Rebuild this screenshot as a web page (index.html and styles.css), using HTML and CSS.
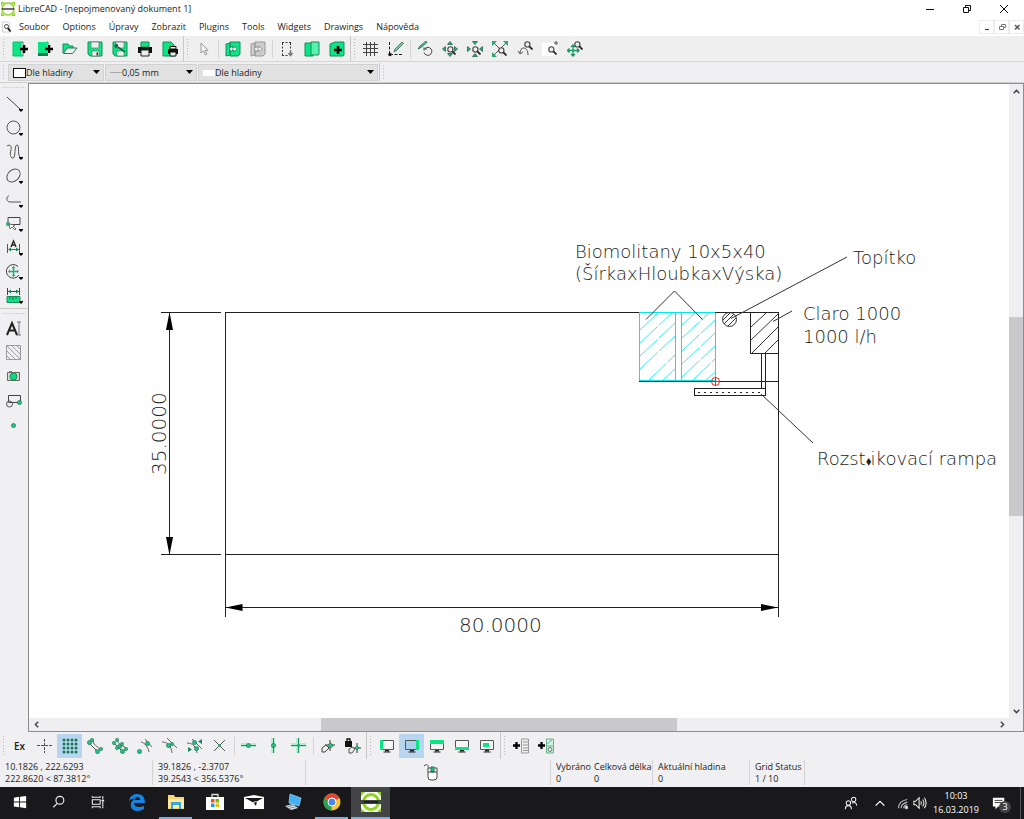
FILE: index.html
```html
<!DOCTYPE html>
<html lang="cs">
<head>
<meta charset="utf-8">
<title>LibreCAD - [nepojmenovaný dokument 1]</title>
<link rel="stylesheet" href="styles.css">
</head>
<body>
<svg class="defs" aria-hidden="true">
  <defs>
    <symbol id="node" viewBox="0 0 4 4"><circle cx="2" cy="2" r="1.7" fill="#27c184" stroke="#16704d" stroke-width=".5"/></symbol>
    <symbol id="lens" viewBox="0 0 8 8"><circle cx="3" cy="3" r="2.3" fill="#eee" stroke="#444"/><path d="M4.8 4.8 7.5 7.5" stroke="#222" stroke-width="1.6"/></symbol>
    <symbol id="drop" viewBox="0 0 4 3"><path d="M0 0h4v1L2 3 0 1z" fill="#000"/></symbol>
    <symbol id="plus" viewBox="0 0 8 8"><path d="M4 0v8M0 4h8" stroke="#000" stroke-width="2.6"/></symbol>
    <symbol id="libre" viewBox="0 0 20 20"><circle cx="10" cy="10" r="8.500" fill="#fff" stroke="#8fd321" stroke-width="2"/><path d="M0 1h5M1 0v5M15 1h5M19 0v5M0 19h5M1 15v5M15 19h5M19 15v5" stroke="#8fd321" stroke-width="2"/><path d="M1 10h18" stroke="#333" stroke-width="2"/></symbol>
    <symbol id="libre-solid" viewBox="0 0 20 20"><path d="M0 0h20v20H0z" fill="#f4fbe8"/><circle cx="10" cy="10" r="7.500" fill="#fff" stroke="#8fd321" stroke-width="3"/><path d="M0 10h20" stroke="#434446" stroke-width="4"/><path d="M3 10h14" stroke="#222" stroke-width="2"/><path d="M0 0h4L0 4zM20 0h-4l4 4zM0 20h4l-4-4zM20 20h-4l4-4z" fill="#8fd321"/></symbol>
    <symbol id="monitor" viewBox="0 0 16 16"><path d="M1.500 2.500h13v9h-13z" fill="#f6f6f6" stroke="#555"/><path d="M6 12h4v1.500H6z" fill="#222"/><path d="M4.500 14h7" stroke="#222"/></symbol>
  </defs>
</svg>

<header class="titlebar">
  <svg class="app-icon" viewBox="0 0 20 20"><use href="#libre"/></svg>
  <h1>LibreCAD - [nepojmenovaný dokument 1]</h1>
  <div class="win-controls">
    <button aria-label="Minimalizovat"><svg viewBox="0 0 10 10"><path d="M1 5.500h8" stroke="#111"/></svg></button>
    <button aria-label="Obnovit"><svg viewBox="0 0 10 10" fill="none" stroke="#111"><path d="M1.500 3.500h5v5h-5zM3.500 3V1.500h5v5H7"/></svg></button>
    <button aria-label="Zavřít"><svg viewBox="0 0 10 10"><path d="M1 1l8 8M9 1 1 9" stroke="#111"/></svg></button>
  </div>
</header>

<nav class="menubar">
  <svg class="doc-icon" viewBox="0 0 12 12"><path d="M1.500.5h6l2 2v9h-8z" fill="#fff" stroke="#ccc"/><circle cx="6" cy="5.500" r="2.200" fill="none" stroke="#333"/><path d="M7.500 7.500l3 3.500" stroke="#111" stroke-width="1.800"/></svg>
  <button>Soubor</button><button>Options</button><button>Úpravy</button><button>Zobrazit</button><button>Plugins</button><button>Tools</button><button>Widgets</button><button>Drawings</button><button>Nápověda</button>
  <div class="doc-controls">
    <button aria-label="Minimalizovat dokument"><svg viewBox="0 0 8 8"><path d="M2 6.500h4" stroke="#444" stroke-width="1.200"/></svg></button>
    <button aria-label="Obnovit dokument"><svg viewBox="0 0 8 8" fill="none" stroke="#777"><path d="M1.500 3.500h4v3h-4zM3.500 3V1.500h4v3H6"/></svg></button>
    <button aria-label="Zavřít dokument"><svg viewBox="0 0 8 8"><path d="M2 2l4.500 4.500M6.500 2 2 6.500" stroke="#555" stroke-width="1.500"/></svg></button>
  </div>
</nav>

<div class="toolbar">
  <div class="group">
    <i class="grip"></i>
    <button aria-label="Nový"><svg viewBox="0 0 16 16"><path d="M1 1h8v14H1z" fill="#0be584" stroke="#0bbf70"/><path d="M9 1h2v3M9 15h2v-3" fill="none" stroke="#159a62"/><use href="#plus" x="8" y="4" width="8" height="8"/></svg></button>
    <button aria-label="Nový ze šablony"><svg viewBox="0 0 16 16"><path d="M1 1h9v11H1z" fill="#0be584"/><path d="M1 12h10v3H1z" fill="#167b50"/><path d="M10 1h1v3" fill="none" stroke="#159a62"/><use href="#plus" x="8" y="4" width="8" height="8"/></svg></button>
    <button aria-label="Otevřít"><svg viewBox="0 0 16 16"><path d="M1 12V3h5l1 2h4v2" fill="#0be584" stroke="#148a5a"/><path d="M1.500 12.500 5 7h10l-4.500 5.500z" fill="#e9f7f0" stroke="#2f7358"/></svg></button>
    <button aria-label="Uložit"><svg viewBox="0 0 16 16"><path d="M1 1h14v14H3l-2-2z" fill="#0be584" stroke="#168c5b"/><path d="M4 1h8v6H4zM5 10h7v5H5z" fill="#eee" stroke="#60766c" stroke-width=".7"/><path d="M9.500 11.500h1.500v3H9.500z" fill="#333"/></svg></button>
    <button aria-label="Uložit jako"><svg viewBox="0 0 16 16"><path d="M1 1h14v14H3l-2-2z" fill="#0be584" stroke="#168c5b"/><path d="M4 1h8v6H4zM5 10h7v5H5z" fill="#eee" stroke="#60766c" stroke-width=".7"/><path d="M3 4l10 7M3 4l1 3M3 4h3" stroke="#254b3b" stroke-width="1.500"/></svg></button>
    <button aria-label="Tisk"><svg viewBox="0 0 16 16"><path d="M4 1h8v5H4z" fill="#0be584" stroke="#168c5b"/><path d="M1 6h14v6H1z" fill="#0c120f"/><path d="M4 9h8v6H4z" fill="#eee" stroke="#222"/></svg></button>
    <button aria-label="Náhled tisku"><svg viewBox="0 0 16 16"><path d="M1 1h8l3 3v11H1z" fill="#0be584" stroke="#168c5b"/><path d="M6 8h10v5H6z" fill="#111"/><path d="M8 5.500h6V8H8zM8 11h6v4H8z" fill="#dff5eb" stroke="#111"/></svg></button>
  </div>
  <div class="group">
    <i class="grip"></i>
    <button aria-label="Výběr"><svg viewBox="0 0 16 16"><path d="M5 2v10l2.500-2 2 4 1.500-1-2-3.500h3z" fill="#f4f4f4" stroke="#999"/></svg></button>
    <i class="sep"></i>
    <button aria-label="Vlevo"><svg viewBox="0 0 16 16"><path d="M1 3l4-1v12l-4 1zM5 1h10v12l-2 2H5z" fill="#0be584" stroke="#168c5b"/><path d="M4 8l3-3v2h2V5l3 3-3 3V9H7v2z" fill="#e8fff3" stroke="#28795b" stroke-width=".7"/></svg></button>
    <button aria-label="Vpravo"><svg viewBox="0 0 16 16"><path d="M1 3l4-1v12l-4 1zM5 1h10v12l-2 2H5z" fill="#ccc" stroke="#999"/><path d="M4 8l3-3v2h2V5l3 3-3 3V9H7v2z" fill="#eee" stroke="#888" stroke-width=".7"/></svg></button>
    <i class="sep"></i>
    <button aria-label="Vyjmout"><svg viewBox="0 0 16 16"><path d="M3 1.500h9M3 14.500h6M3.500 2v12M11.500 2v7" fill="none" stroke="#333" stroke-dasharray="2 1.500"/><path d="M11.500 9v5M9.500 12l2 2.500 2-2.500" stroke="#777" fill="none" stroke-width="1.500"/></svg></button>
    <button aria-label="Kopírovat"><svg viewBox="0 0 16 16"><path d="M1 2h8v13H1z" fill="#0be584" stroke="#168c5b"/><path d="M7 1h8v12l-1 1H7z" fill="#5af0ae" stroke="#168c5b"/></svg></button>
    <button aria-label="Vložit"><svg viewBox="0 0 16 16"><path d="M1 3l5-2h9v13l-1 1H1z" fill="#0be584" stroke="#168c5b"/><use href="#plus" x="5" y="5" width="8" height="8"/></svg></button>
  </div>
  <div class="group">
    <i class="grip"></i>
    <button aria-label="Mřížka"><svg viewBox="0 0 16 16"><path d="M3.500 1v14M7.500 1v14M11.500 1v14M0 3.500h15M0 7.500h15M0 11.500h15" stroke="#444"/></svg></button>
    <button aria-label="Návrh"><svg viewBox="0 0 16 16"><path d="M1.500 1v13M2 13.500h13" stroke="#222" stroke-dasharray="3 1.500"/><path d="M6 11l1-3 7-7 1.500 1.500-7 7z" fill="#79c9a6" stroke="#2d6b50" stroke-width=".8"/><circle cx="2" cy="13.500" r="1.700" fill="#111"/></svg></button>
    <i class="sep"></i>
    <button aria-label="Překreslit"><svg viewBox="0 0 16 16"><path d="M1 8l2-3 6-5 1 1.500-6 5z" fill="#4fc695" stroke="#24664c" stroke-width=".8"/><path d="M8 7.500a4 4 0 1 1-1 4M7 6.500v3M7 8h3" fill="none" stroke="#444"/></svg></button>
    <button aria-label="Přiblížit"><svg viewBox="0 0 16 16"><path d="M5.500 3.500 8 .5l2.500 3zM5.500 12.500l2.500 3 2.500-3zM3.500 5.500.5 8l3 2.500zM12.500 5.500l3 2.500-3 2.500z" fill="#27a875" stroke="#165c41" stroke-width=".7"/><use href="#lens" x="5" y="5" width="9" height="9"/></svg></button>
    <button aria-label="Oddálit"><svg viewBox="0 0 16 16"><path d="M5.500.5h5L8 3.500zM5.500 15.500h5L8 12.500zM.5 5.500v5L3.500 8zM15.500 5.500v5L12.500 8z" fill="#27a875" stroke="#165c41" stroke-width=".7"/><use href="#lens" x="5" y="5" width="9" height="9"/></svg></button>
    <button aria-label="Zobrazit vše"><svg viewBox="0 0 16 16"><path d="M2 2l12 12M14 2 2 14" stroke="#555"/><path d="M0 0h5L0 5zM16 0v5l-5-5zM0 16v-5l5 5z" fill="#27a875"/><use href="#lens" x="6" y="6" width="9" height="9"/></svg></button>
    <button aria-label="Předchozí pohled"><svg viewBox="0 0 16 16"><path d="M1 10l2 3 3-2M3 12c0-7 8-7 8 2" fill="none" stroke="#555"/><use href="#lens" x="7" y="0" width="9" height="9"/></svg></button>
    <button aria-label="Přiblížit okno"><svg viewBox="0 0 16 16"><path d="M0 2h14v13H0z" fill="#fff"/><path d="M14 0v4M12 2h4" stroke="#555"/><use href="#lens" x="6" y="5" width="9" height="9"/></svg></button>
    <button aria-label="Posun"><svg viewBox="0 0 16 16"><path d="M6 4v11M.5 9.500h11M4 6l2-2 2 2M4 13l2 2 2-2M2.500 7.500l-2 2 2 2M10 7.500l2 2-2 2" fill="none" stroke="#159562" stroke-width="1.300"/><use href="#lens" x="7" y="0" width="9" height="9"/></svg></button>
  </div>
</div>

<div class="pen-toolbar">
  <i class="grip"></i>
  <div class="combo combo-color"><i class="swatch"></i><select aria-label="Barva"><option>Dle hladiny</option></select><svg viewBox="0 0 8 5"><path d="M1 0h7L4.500 4z"/></svg></div>
  <div class="combo combo-width"><i class="stroke"></i><select aria-label="Tloušťka čáry"><option>0,05 mm</option></select><svg viewBox="0 0 8 5"><path d="M1 0h7L4.500 4z"/></svg></div>
  <div class="combo combo-type"><i class="blank"></i><select aria-label="Typ čáry"><option>Dle hladiny</option></select><svg viewBox="0 0 8 5"><path d="M1 0h7L4.500 4z"/></svg></div>
  <div class="group"><i class="grip"></i></div>
</div>

<main class="workspace">
  <aside class="palette">
    <i class="grip-h"></i>
    <button aria-label="Čára"><svg viewBox="0 0 18 18"><path d="M2 2l13 12" stroke="#444"/><use href="#drop" x="14" y="14" width="4" height="3"/></svg></button>
    <button aria-label="Kružnice"><svg viewBox="0 0 18 18"><circle cx="8.500" cy="8.500" r="6.500" fill="none" stroke="#555"/><use href="#drop" x="14" y="14" width="4" height="3"/></svg></button>
    <button aria-label="Křivka"><svg viewBox="0 0 18 18"><path d="M2 3c3-2 5 0 4 4s-1 8 2 8 1-13 4-13 0 9 3 12" fill="none" stroke="#555"/><use href="#drop" x="14" y="14" width="4" height="3"/></svg></button>
    <button aria-label="Elipsa"><svg viewBox="0 0 18 18"><ellipse cx="8.500" cy="8.500" rx="7.500" ry="5.500" transform="rotate(-42 8.500 8.500)" fill="none" stroke="#555"/><use href="#drop" x="14" y="14" width="4" height="3"/></svg></button>
    <button aria-label="Lomená čára"><svg viewBox="0 0 18 18"><path d="M4 5C1 5 1 11 5 11h11" fill="none" stroke="#555"/><use href="#drop" x="14" y="14" width="4" height="3"/></svg></button>
    <button aria-label="Vybrat"><svg viewBox="0 0 18 18"><path d="M3 2.500h12v7H3z" fill="none" stroke="#444"/><use href="#node" x="1" y="7" width="4" height="4"/><path d="M4 9l1 5 2-2 3 3 1-1-3-3 2-1z" fill="#fff" stroke="#555" stroke-width=".8"/><use href="#drop" x="14" y="14" width="4" height="3"/></svg></button>
    <button aria-label="Kóta"><svg viewBox="0 0 18 18"><path d="M2.500 5v9M14.500 5v9" stroke="#555"/><path d="M4 10.500h10" stroke="#168557"/><path d="M3 10.500l3-2v4zM14 10.500l-3-2v4z" fill="#168557"/><path d="M6 8l2.500-6L11 8M7 6h3" fill="none" stroke="#222" stroke-width="1.300"/><use href="#drop" x="14" y="14" width="4" height="3"/></svg></button>
    <button aria-label="Úpravy"><svg viewBox="0 0 18 18"><path d="M14 12A6.800 6.800 0 1 1 13 3.500" fill="none" stroke="#444"/><path d="M8.500 4.500v8M4.500 8.500h8" stroke="#20ae77" stroke-width="1.600"/><path d="M8.500 3l2 2h-4zM8.500 14l2-2h-4zM3 8.500l2-2v4zM14 8.500l-2-2v4z" fill="#20ae77"/><use href="#drop" x="14" y="14" width="4" height="3"/></svg></button>
    <button aria-label="Informace"><svg viewBox="0 0 18 18"><path d="M2.500 1v7M14.500 1v7M3 4.500h12" stroke="#444"/><path d="M3 4.500l3-2v4zM14 4.500l-3-2v4z" fill="#168557"/><path d="M2 9.500h13v6H2z" fill="#0be584" stroke="#168c5b"/><path d="M5 10v2M8 10v3M11 10v2" stroke="#176c49"/><use href="#drop" x="14" y="14" width="4" height="3"/></svg></button>
    <i class="rule"></i>
    <i class="grip-h"></i>
    <button aria-label="Text"><svg viewBox="0 0 18 18"><path d="M2 15 7 3l5 12M4 10.500h7" fill="none" stroke="#222" stroke-width="2"/><path d="M12 2h4M12 15h4M14 2v13" stroke="#777"/></svg></button>
    <button aria-label="Šrafa"><svg viewBox="0 0 18 18"><path d="M1.500 1.500h14v14h-14zM2 12l4 4M2 7l9 9M2 2l14 14M7 2l9 9M12 2l4 4" fill="none" stroke="#888" stroke-width=".8"/></svg></button>
    <button aria-label="Obrázek"><svg viewBox="0 0 18 18"><path d="M2.500 4.500h12v8h-12z" fill="#d8d8ce" stroke="#666"/><path d="M4 3h3v2H4z" fill="#777"/><circle cx="8.500" cy="8.500" r="3.500" fill="#13d882" stroke="#168c5b"/></svg></button>
    <button aria-label="Blok"><svg viewBox="0 0 18 18"><path d="M3.500 3.500h12v7h-12z" fill="none" stroke="#444"/><circle cx="4.500" cy="12" r="3" fill="none" stroke="#555"/><use href="#node" x="12" y="8" width="5" height="5"/></svg></button>
    <button aria-label="Bod"><svg viewBox="0 0 18 18"><use href="#node" x="6" y="7" width="5" height="5"/></svg></button>
  </aside>

  <section class="view">
    <svg class="drawing" role="img" aria-label="Výkres">
      <g transform="translate(-29 -84)" shape-rendering="crispEdges" fill="none" stroke="#222">
        <g stroke="#00e8e8">
          <path d="M639.500 380V312.500H675.500V380M681.500 380V312.500H715.500V380M639 380.500H715"/>
          <path d="M640 330l18-17M640 343l32-30M640 356l35-33M640 369l35-33M649 380l26-25M663 380l12-11M682 325l13-12M682 338l27-25M682 351l33-31M682 364l33-31M682 377l33-31M693 380l22-21M706 380l9-8" shape-rendering="auto" stroke-width=".8" stroke-dasharray="24 2"/>
          <path d="M675 312.500h6"/>
        </g>
        <path d="M225.500 617V312.500H639M715 312.500h63M778.500 312v305M225 554.500h553M161 312.500h60M161 554.500h60M169.500 312v242M225 607.500h553M639 381.500h139"/>
        <path d="M169.500 312l3.500 18h-7zM169.500 555l3.500-18h-7zM225.500 607.500l17-3.500v7zM778 607.500l-17-3.500v7z" fill="#000" stroke="none" shape-rendering="auto"/>
        <path d="M750.500 312v41.500h28M761.500 354v34M765.500 354v34M694.500 388.500h71v7h-71z"/>
        <path d="M698 392.500h66" stroke-dasharray="2 4"/>
        <g shape-rendering="auto" stroke="#333">
          <path d="M646 319.500 674.500 291 702.500 319.500M731 318.500 847 257M773 321.500 792 311M761 394l52 49M751 327l15-14M751 340l27-26M752 353l26-26M765 353l13-13"/>
          <circle cx="729.500" cy="319.500" r="7"/>
          <path d="M723 320l7-7M724 324l10-10M728 326l8-8"/>
          <g stroke="#ef2020"><circle cx="715.500" cy="381.500" r="4"/><path d="M715.500 377v9M711 381.500h9"/></g>
        </g>
      </g>
      <g class="cad-text" transform="translate(-29 -84)">
        <text x="575" y="258">Biomolitany 10x5x40</text>
        <text x="575" y="280">(ŠírkaxHloubkaxVýska)</text>
        <text x="853" y="264">Topítko</text>
        <text x="803" y="320">Claro 1000</text>
        <text x="803" y="343">1000 l/h</text>
        <text x="817" y="465">Rozst<tspan class="mark">⬧</tspan>ikovací rampa</text>
        <text class="dim" x="459" y="632">80.0000</text>
        <text class="dim" transform="translate(166 475) rotate(-90)">35.0000</text>
      </g>
    </svg>
    <div class="vscroll">
      <button aria-label="Nahoru"><svg viewBox="0 0 8 8"><path d="M1.500 5.500 4 3l2.500 2.500"/></svg></button>
      <div class="track"><i class="before"></i><i class="thumb"></i><i class="after"></i></div>
      <button aria-label="Dolů"><svg viewBox="0 0 8 8"><path d="M1.500 2.500 4 5l2.500-2.500"/></svg></button>
    </div>
    <div class="hscroll">
      <button aria-label="Vlevo"><svg viewBox="0 0 8 8"><path d="M5.500 1.500 3 4l2.500 2.500"/></svg></button>
      <div class="track"><i class="before"></i><i class="thumb"></i><i class="after"></i></div>
      <button aria-label="Vpravo"><svg viewBox="0 0 8 8"><path d="M2.500 1.500 5 4 2.500 6.500"/></svg></button>
    </div>
  </section>
</main>

<div class="toolbar snapbar">
  <div class="group">
    <i class="grip"></i>
    <button class="ex">Ex</button>
    <button aria-label="Volné uchopení"><svg viewBox="0 0 16 16"><path d="M7.500 1v14M0 7.500h15" stroke="#555" stroke-dasharray="3 1"/></svg></button>
    <button class="on" aria-label="Mřížka"><svg viewBox="0 0 16 16"><path d="M2 2v13M6 2v13M10 2v13M14 2v13" stroke="#167b55" stroke-width="3" stroke-linecap="round" stroke-dasharray="0 4"/></svg></button>
    <button aria-label="Koncové body"><svg viewBox="0 0 16 16"><path d="M2 5l8 8M6 2c0 5 4 6 7 9" fill="none" stroke="#555"/><use href="#node" x="0" y="2" width="5" height="5"/><use href="#node" x="3" y="0" width="4" height="4"/><use href="#node" x="8" y="11" width="5" height="5"/><use href="#node" x="12" y="9" width="4" height="4"/></svg></button>
    <button aria-label="Na entitě"><svg viewBox="0 0 16 16"><path d="M2 5l9 9M5 1c1 6 5 6 9 9" fill="none" stroke="#555"/><use href="#node" x="0" y="3" width="4" height="4"/><use href="#node" x="3" y="0" width="4" height="4"/><use href="#node" x="5" y="6" width="5" height="5"/><use href="#node" x="8" y="4" width="4" height="4"/><use href="#node" x="8" y="11" width="5" height="5"/><use href="#node" x="12" y="9" width="4" height="4"/><use href="#node" x="3" y="8" width="4" height="4"/></svg></button>
    <button aria-label="Střed"><svg viewBox="0 0 16 16"><path d="M4 4c4 1 7 5 8 10M8 1l7 8" fill="none" stroke="#666"/><use href="#node" x="8" y="3" width="5" height="5"/><use href="#node" x="0" y="11" width="5" height="5"/></svg></button>
    <button aria-label="Uprostřed"><svg viewBox="0 0 16 16"><path d="M0 4c6 0 9 4 10 11M5 0l10 10" fill="none" stroke="#666"/><use href="#node" x="4" y="5" width="5" height="5"/><use href="#node" x="8" y="4" width="4" height="4"/></svg></button>
    <button aria-label="Vzdálenost"><svg viewBox="0 0 16 16"><path d="M0 5c6 0 9 4 10 10M5 1l10 10" fill="none" stroke="#666"/><use href="#node" x="5" y="2" width="5" height="5"/><use href="#node" x="7" y="8" width="5" height="5"/><path d="M15 1v5l-4-2.500zM1 9v5l4-2.500z" fill="#16895b"/></svg></button>
    <button aria-label="Průsečík"><svg viewBox="0 0 16 16"><path d="M2 2l11 11M13 2 2 13" stroke="#555"/><use href="#node" x="6" y="6" width="3" height="3"/></svg></button>
    <i class="sep"></i>
    <button aria-label="Vodorovně"><svg viewBox="0 0 16 16"><path d="M0 5h15v4H0z" fill="#b3eed2"/><path d="M0 7.500h15" stroke="#248b61"/><use href="#node" x="5" y="5" width="5" height="5"/></svg></button>
    <button aria-label="Svisle"><svg viewBox="0 0 16 16"><path d="M5 0h4v15H5z" fill="#b3eed2"/><path d="M7.500 0v15" stroke="#248b61"/><use href="#node" x="5" y="5" width="5" height="5"/></svg></button>
    <button aria-label="Ortogonálně"><svg viewBox="0 0 16 16"><path d="M5 0h4v15H5zM0 5h15v4H0z" fill="#b3eed2"/><path d="M7.500 0v15M0 7.500h15" stroke="#248b61"/><use href="#node" x="6" y="6" width="3" height="3"/></svg></button>
    <i class="sep"></i>
    <button aria-label="Relativní nula"><svg viewBox="0 0 16 16"><path d="M10 2v11M5 7h10" stroke="#333"/><use href="#node" x="8" y="5" width="5" height="5"/><path d="M2 10l4-3 3 3-4 4H2z" fill="#eee" stroke="#444"/></svg></button>
    <button aria-label="Zamknout relativní nulu"><svg viewBox="0 0 16 16"><path d="M0 3h7v6H0z" fill="#111"/><path d="M2 4V1h3v3" fill="none" stroke="#111" stroke-width="1.300"/><path d="M12 5v10M7 10h9" stroke="#333"/><use href="#node" x="10" y="8" width="4" height="4"/><path d="M4 11l3-2 3 2-3 4H4z" fill="#eee" stroke="#555"/></svg></button>
  </div>
  <div class="group">
    <i class="grip"></i>
    <button aria-label="Levý panel"><svg viewBox="0 0 16 16"><use href="#monitor" width="16" height="16"/><path d="M1 2h3v10H1z" fill="#0be584"/></svg></button>
    <button class="on" aria-label="Pravý panel"><svg viewBox="0 0 16 16"><use href="#monitor" width="16" height="16"/><path d="M2 3h10v8H2z" fill="#abd0ed"/><path d="M12 2h3v10h-3z" fill="#0be584"/></svg></button>
    <button aria-label="Horní panel"><svg viewBox="0 0 16 16"><use href="#monitor" width="16" height="16"/><path d="M1 2h14v4H1z" fill="#0be584"/></svg></button>
    <button aria-label="Dolní panel"><svg viewBox="0 0 16 16"><use href="#monitor" width="16" height="16"/><path d="M1 9h14v3H1z" fill="#0be584"/></svg></button>
    <button aria-label="Plovoucí panel"><svg viewBox="0 0 16 16"><use href="#monitor" width="16" height="16"/><path d="M4 5h6v4H4z" fill="#0be584"/></svg></button>
  </div>
  <div class="group">
    <i class="grip"></i>
    <button aria-label="Přidat nabídku"><svg viewBox="0 0 16 16"><path d="M8.500 1h7v14h-7zM10 4h5M10 7h5M10 10h5M10 12.500h5" fill="#eee" stroke="#999"/><use href="#plus" y="4" width="7" height="7"/></svg></button>
    <button aria-label="Přidat panel"><svg viewBox="0 0 16 16"><path d="M8.500 1h7v14h-7zM9 8h6M9 6l5-4" fill="#d4f0e3" stroke="#6cae91"/><circle cx="12" cy="11.500" r="2" fill="none" stroke="#555" stroke-width=".8"/><use href="#plus" y="4" width="7" height="7"/></svg></button>
  </div>
</div>

<footer class="statusbar">
  <div class="cell coords">10.1826 , 222.6293<br>222.8620 &lt; 87.3812°</div>
  <div class="cell coords">39.1826 , -2.3707<br>39.2543 &lt; 356.5376°</div>
  <div class="cell mouse"><svg viewBox="0 0 16 18"><path d="M1 3c3-3 5 0 4 2M5 5h9v9q0 3-3 3H8q-3 0-3-3z" fill="#fff" stroke="#444"/><path d="M8 4h3v5H8z" fill="#17c77d" stroke="#167b55"/><path d="M5 9h9" stroke="#444"/></svg></div>
  <div class="cell pair"><span>Vybráno<br>0</span><span>Celková délka<br>0</span></div>
  <div class="cell layer">Aktuální hladina<br>0</div>
  <div class="cell status-grid">Grid Status<br>1 / 10</div>
</footer>

<div class="taskbar">
  <button aria-label="Start"><svg viewBox="0 0 16 16"><path d="M1 3l6-1v5.500H1zM8 2l7-1v6.500H8zM1 8.500h6V14l-6-1zM8 8.500h7V15l-7-1z" fill="#fff"/></svg></button>
  <button aria-label="Hledat"><svg viewBox="0 0 16 16" fill="none" stroke="#eee" stroke-width="1.300"><circle cx="9" cy="6" r="4.500"/><path d="M6 9.500 1.500 14"/></svg></button>
  <button aria-label="Zobrazení úkolů"><svg viewBox="0 0 16 16" fill="none" stroke="#eee" stroke-width="1.200"><path d="M1 2.500h10M1 13.500h10M1.500 1v2M10.500 1v2M1.500 13v2M10.500 13v2M1.500 5.500h9v5h-9zM13.500 1v4M13.500 8v7"/><path d="M12 6.500h3" stroke-width="2"/></svg></button>
  <button aria-label="Edge"><svg viewBox="0 0 18 18"><path d="M1 8C2 3 5 1 9 1c5 0 8 3 8 9H6c0 3 3 4 5 4q3 0 5-1v3q-3 2-7 2c-5 0-7-4-6-8 1-2 3-4 5-4Q3 5 1 8zm6-1h5q0-3-3-3-2 0-2 3z" fill="#1684e0"/></svg></button>
  <button class="open" aria-label="Průzkumník"><svg viewBox="0 0 18 18"><path d="M1 2h6l1 2h9v12H1z" fill="#f7d774"/><path d="M1 6h16v9H1z" fill="#ffe9a0"/><path d="M4 16V9h10v7h-2v-4H6v4z" fill="#38a7de"/></svg></button>
  <button aria-label="Store"><svg viewBox="0 0 18 18"><path d="M6 4V1.500h6V4" fill="none" stroke="#ddd" stroke-width="1.300"/><path d="M0 4h18v13H0z" fill="#fff"/><path d="M5 6h3.500v3.500H5z" fill="#ef5024"/><path d="M9.500 6H13v3.500H9.500z" fill="#7db700"/><path d="M5 10.500h3.500V14H5z" fill="#0ca2ec"/><path d="M9.500 10.500H13V14H9.500z" fill="#fdb900"/></svg></button>
  <button class="mail" aria-label="Pošta"><svg viewBox="0 0 20 18"><path d="M0 4l10-2 10 2v12H0z" fill="#fff"/><path d="M1 5h18l-9 5zM9 9l3 4 1-5z" fill="#19191b"/></svg></button>
  <button aria-label="Počítač"><svg viewBox="0 0 18 18"><path d="M6 1l11 4-2 8-10-3z" fill="#43b0f2" stroke="#9dd7f8" stroke-width=".7"/><path d="M1 13l8-2 5 4-7 2z" fill="#d9e4ec"/><path d="M3 14l7-2M5 15.500l7-2" stroke="#7d8d99"/></svg></button>
  <button class="open" aria-label="Chrome"><svg viewBox="0 0 18 18"><circle cx="9" cy="9" r="8.500" fill="#f7c52e"/><path d="M9 9 1.500 5A8.500 8.500 0 0 1 16.500 5z" fill="#e24435"/><path d="M1.500 5 9 9 8.500 17.500A8.500 8.500 0 0 1 1.500 5z" fill="#2da352"/><circle cx="9" cy="9" r="4" fill="#4586ef" stroke="#fff"/></svg></button>
  <button class="open active" aria-label="LibreCAD"><svg viewBox="0 0 20 20"><use href="#libre-solid"/></svg></button>
  <div class="tray">
    <button class="people" aria-label="Lidé"><svg viewBox="0 0 16 16" fill="none" stroke="#eee" stroke-width="1.200"><circle cx="5" cy="8" r="2.500"/><path d="M1.500 15q0-4 3.500-4t3.500 4"/><circle cx="11" cy="4" r="2.500"/><path d="M9 8q5-2 5.500 3"/></svg></button>
    <button class="more" aria-label="Skryté ikony"><svg viewBox="0 0 16 16"><path d="M3 11l5-5 5 5" fill="none" stroke="#fff" stroke-width="1.400"/></svg></button>
    <button class="small" aria-label="Síť"><svg viewBox="0 0 16 16" fill="none" stroke="#bbb" stroke-width="1.200"><path d="M4 14C4 8 8 5 14 4M7 14c0-4 3-6 7-7M10 14c0-2 1-4 4-4"/><circle cx="13" cy="13" r="1.500" fill="#fff"/></svg></button>
    <button class="small" aria-label="Hlasitost"><svg viewBox="0 0 16 16" fill="none" stroke="#eee" stroke-width="1.200"><path d="M1 6h2l4-4v12l-4-4H1zM9 6q1 2 0 4M11 4q3 4 0 8M13 2q4 6 0 12"/></svg></button>
    <time class="clock">10:03<br>16.03.2019</time>
    <button class="notice" aria-label="Oznámení"><svg viewBox="0 0 16 14"><path d="M1 1h13v10H7l-3 3v-3H1z" fill="#fff"/><path d="M3 4h9M3 6.500h9" stroke="#222"/></svg><span class="badge">3</span></button>
  </div>
</div>
</body>
</html>
```
FILE: styles.css
```css
* { box-sizing: border-box; }
html, body { height: 100%; }
body {
  margin: 0;
  display: flex;
  flex-direction: column;
  overflow: hidden;
  background: #f0eff1;
  color: #1c1c1c;
  font: 9px/12px "Open Sans", "Noto Sans", sans-serif;
}
button {
  display: flex;
  align-items: center;
  justify-content: center;
  margin: 0;
  padding: 0;
  border: 0;
  background: none;
  color: inherit;
  font: inherit;
}
svg { display: block; flex: none; }
.defs { position: absolute; width: 0; height: 0; }

.titlebar { display: flex; align-items: center; height: 18px; padding-left: 1px; background: #fff; }
.app-icon { width: 14px; height: 14px; margin-right: 3px; }
.titlebar h1 { margin: 0; font-size: 9px; font-weight: 400; }
.win-controls { display: flex; margin-left: auto; padding-right: 2px; }
.win-controls button { width: 37px; height: 16px; }
.win-controls svg { width: 10px; height: 10px; }

.menubar { display: flex; align-items: center; gap: 1px; height: 18px; padding-left: 1px; background: #fff; }
.doc-icon { width: 11px; height: 12px; }
.menubar > button { height: 18px; padding: 0 6px; }
.doc-controls { display: flex; margin-left: auto; }
.doc-controls button { width: 15px; height: 14px; border: 1px solid #ececec; }
.doc-controls svg { width: 8px; height: 8px; }

.toolbar { display: flex; height: 26px; border-bottom: 1px solid #d6d6d6; background: #eeefee; }
.group { display: flex; align-items: center; }
.group + .group, .pen-toolbar .group { margin-left: 1px; border-left: 1px solid #c8c8c8; }
.group button { width: 25px; height: 24px; }
.group button svg { width: 16px; height: 16px; }
.grip {
  align-self: stretch;
  width: 7px;
  margin: 2px 0;
  background: radial-gradient(circle, #b5b5b5 1px, transparent 1px) center / 3px 3px repeat-y;
}
.sep { width: 4px; height: 18px; background: linear-gradient(#d5d5d5, #d5d5d5) center / 1px 100% no-repeat; }

.pen-toolbar { display: flex; height: 21px; padding: 1px 0; border-bottom: 1px solid #d0d0d0; }
.pen-toolbar .grip { margin: 1px 0; }
.combo { display: flex; align-items: center; margin: 1px 0 0 1px; padding: 0 3px 0 4px; background: #e1e1e2; border: 1px solid #d2d2d2; }
.combo select { flex: 1; min-width: 0; padding: 0; border: 0; appearance: none; background: none; color: inherit; font: inherit; }
.combo svg { width: 8px; height: 5px; }
.combo-color { width: 96px; }
.combo-width { width: 92px; }
.combo-type { width: 180px; }
.swatch { width: 13px; height: 10px; border: 1px solid #111; background: #fff; }
.stroke { width: 12px; height: 1px; background: #aaa; }
.blank { width: 12px; height: 6px; background: #fff; }

.workspace { display: flex; flex: 1; min-height: 0; }
.palette { display: flex; flex-direction: column; align-items: center; width: 28px; flex: none; }
.palette button { width: 28px; height: 24px; flex: none; }
.palette svg { width: 18px; height: 18px; }
.grip-h { width: 24px; height: 9px; flex: none; background: radial-gradient(circle, #b5b5b5 1px, transparent 1px) center / 3px 3px repeat-x; }
.rule { align-self: stretch; height: 1px; flex: none; background: #c8c8c8; }
.rule + .grip-h { height: 8px; }

.view { flex: 1; min-width: 0; display: grid; grid-template: minmax(0, 1fr) 13px / minmax(0, 1fr) 14px; border: 1px solid #8d8d90; }
.drawing { width: 100%; height: 100%; background: #fff; }
.cad-text { font: 200 18px "DejaVu Sans", sans-serif; fill: #222; }
.cad-text .dim { font-size: 20px; }
.cad-text .mark { font-size: 12px; }
.vscroll, .hscroll { display: flex; background: #efeef0; }
.vscroll { flex-direction: column; }
.track { flex: 1; display: flex; }
.vscroll .track { flex-direction: column; }
.thumb { background: #c9c8ca; }
.vscroll button { width: 14px; height: 14px; }
.hscroll button { width: 14px; height: 13px; }
.vscroll svg, .hscroll svg { width: 9px; height: 9px; fill: none; stroke: #444; stroke-width: 1.3; }
.vscroll .before { flex: 219; }
.vscroll .thumb { flex: 199; }
.vscroll .after { flex: 188; }
.hscroll .before { flex: 278; }
.hscroll .thumb { flex: 357; }
.hscroll .after { flex: 318; }

.snapbar { height: 28px; border-bottom: 0; padding-bottom: 1px; background: none; }
.group .on { background: #b7d5ee; }
.snapbar .ex { font-size: 10px; font-weight: 600; }

.statusbar { display: flex; height: 27px; padding-bottom: 2px; }
.cell { flex: none; padding: 1px 0 0 5px; border-right: 1px solid #d3d3d3; white-space: nowrap; }
.coords { width: 153px; }
.mouse { display: flex; justify-content: center; width: 245px; padding-top: 3px; }
.mouse svg { width: 18px; height: 18px; }
.pair { display: flex; gap: 3px; width: 102px; }
.layer { width: 97px; }
.status-grid { width: 55px; }

.taskbar { display: flex; height: 32px; background: #19191b; color: #fff; }
.taskbar > button { width: 39px; height: 32px; border-bottom: 2px solid transparent; }
.taskbar > button svg { width: 18px; height: 18px; }
.taskbar > button:nth-child(-n+3) svg { width: 14px; height: 14px; }
.taskbar > .mail svg { width: 20px; height: 18px; }
.taskbar > .open { width: 33px; margin: 0 3px; border-color: #76b1e4; }
.taskbar > .active { width: 39px; margin: 0; background: #434446; }
.taskbar > .active svg { width: 20px; height: 20px; }
.tray { display: flex; align-items: center; margin-left: auto; padding-right: 5px; border-right: 1px solid #555; margin-right: 3px; }
.tray svg { width: 14px; height: 14px; }
.people { width: 32px; }
.more { width: 26px; }
.small { width: 18px; }
.clock { width: 54px; line-height: 14px; text-align: center; }
.notice { position: relative; width: 32px; }
.badge { position: absolute; left: 16px; top: 5px; width: 12px; height: 12px; border-radius: 6px; background: #444; line-height: 12px; }
```
